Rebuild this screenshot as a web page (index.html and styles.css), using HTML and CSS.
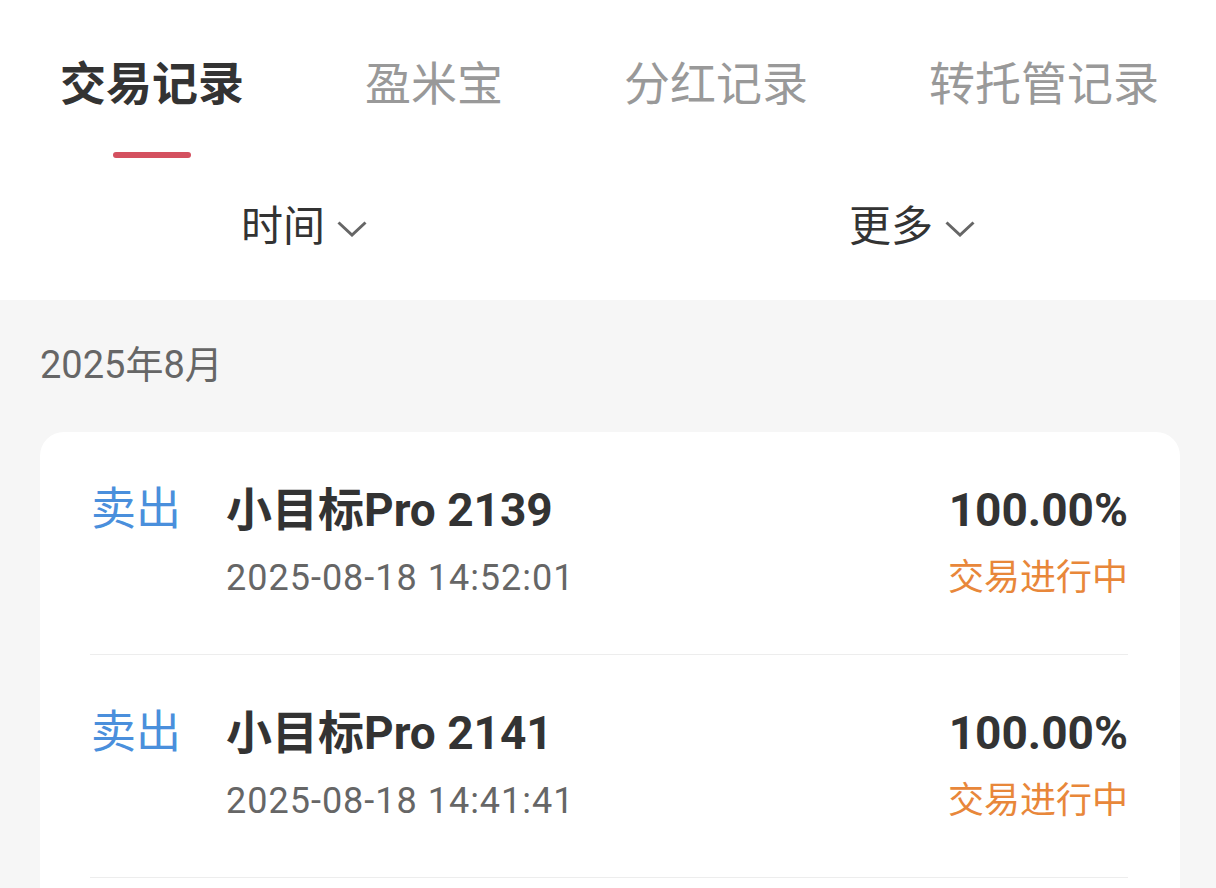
FILE: index.html
```html
<!DOCTYPE html>
<html lang="zh-CN">
<head>
<meta charset="utf-8">
<title>交易记录</title>
<link rel="stylesheet" href="styles.css">
</head>
<body>
<header class="header">
  <nav class="tabs">
    <div class="tab tab-active"><span class="tab-label">交易记录</span><span class="tab-bar"></span></div>
    <div class="tab"><span class="tab-label">盈米宝</span></div>
    <div class="tab"><span class="tab-label">分红记录</span></div>
    <div class="tab"><span class="tab-label">转托管记录</span></div>
  </nav>
  <div class="filters">
    <div class="filter"><span class="filter-label">时间</span>
      <svg class="chev" viewBox="0 0 30 16" width="30" height="16"><path d="M1.5 1.5 L15 14 L28.5 1.5" fill="none" stroke="#666" stroke-width="3"/></svg>
    </div>
    <div class="filter"><span class="filter-label">更多</span>
      <svg class="chev" viewBox="0 0 30 16" width="30" height="16"><path d="M1.5 1.5 L15 14 L28.5 1.5" fill="none" stroke="#666" stroke-width="3"/></svg>
    </div>
  </div>
</header>
<main class="content">
  <div class="month">2025年8月</div>
  <section class="card">
    <div class="row">
      <div class="type">卖出</div>
      <div class="main">
        <div class="title">小目标Pro 2139</div>
        <div class="date">2025-08-18 14:52:01</div>
      </div>
      <div class="side">
        <div class="pct">100.00%</div>
        <div class="status">交易进行中</div>
      </div>
    </div>
    <div class="row">
      <div class="type">卖出</div>
      <div class="main">
        <div class="title">小目标Pro 2141</div>
        <div class="date">2025-08-18 14:41:41</div>
      </div>
      <div class="side">
        <div class="pct">100.00%</div>
        <div class="status">交易进行中</div>
      </div>
    </div>
  </section>
</main>
</body>
</html>
```
FILE: styles.css
```css
* { box-sizing: border-box; }
html, body {
  margin: 0;
  padding: 0;
}
body {
  background: #f6f6f6;
  font-family: Roboto, "Noto Sans CJK SC", "Noto Sans", sans-serif;
  color: #333;
  overflow: hidden;
}
.header {
  background: #fff;
}
.tabs {
  display: flex;
  gap: 121px;
  padding: 52px 0 0 60px;
  height: 158px;
}
.tab {
  display: flex;
  flex-direction: column;
  align-items: center;
}
.tab-label {
  font-size: 46px;
  line-height: 64px;
  color: #999;
  white-space: nowrap;
}
.tab-active .tab-label {
  color: #333;
  font-weight: 700;
}
.tab-bar {
  margin-top: 36px;
  width: 78px;
  height: 6px;
  border-radius: 3px;
  background: #d4505f;
}
.filters {
  display: flex;
  height: 142px;
  padding-bottom: 4px;
}
.filter {
  flex: 1;
  display: flex;
  align-items: center;
  justify-content: center;
  gap: 12px;
}
.filter-label {
  font-size: 42px;
  line-height: 56px;
  color: #333;
}
.chev {
  display: block;
  margin-top: 4px;
}
.content {
  padding-top: 40px;
}
.month {
  padding-left: 40px;
  font-size: 38px;
  line-height: 50px;
  color: #666;
  margin-bottom: 42px;
}
.card {
  margin: 0 36px 0 40px;
  background: #fff;
  border-radius: 24px;
  padding: 0 52px 200px 50px;
}
.row {
  display: flex;
  align-items: flex-start;
  padding: 52px 0 54px;
  border-bottom: 1px solid #ededed;
}
.type {
  width: 136px;
  flex: none;
  font-size: 45px;
  line-height: 52px;
  color: #4a8fdc;
  padding-left: 1px;
}
.main {
  flex: 1;
}
.title, .pct {
  font-size: 46px;
  line-height: 52px;
  font-weight: 700;
  color: #333;
}
.date, .status {
  margin-top: 20px;
  font-size: 36px;
  line-height: 44px;
  color: #666;
}
.date {
  letter-spacing: 1px;
}
.side {
  text-align: right;
}
.status {
  color: #e8873a;
}
```
